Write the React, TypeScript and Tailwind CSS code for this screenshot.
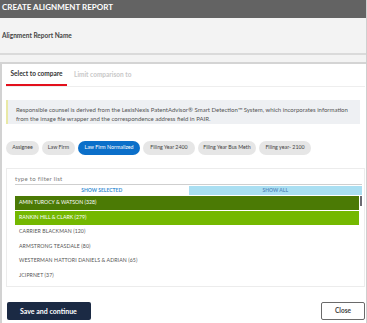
export default function App() {
  const chips = [
    { label: "Assignee", w: "w-[33px]" },
    { label: "Law Firm", w: "w-[33px]" },
    { label: "Law Firm Normalized", w: "w-[62px]", active: true },
    { label: "Filing Year 2400", w: "w-[52px]" },
    { label: "Filing Year Bus Meth", w: "w-[58px]" },
    { label: "Filing year- 2100", w: "w-[52px]" },
  ];
  const rows = [
    "CARRIER BLACKMAN (120)",
    "ARMSTRONG TEASDALE (80)",
    "WESTERMAN HATTORI DANIELS & ADRIAN (65)",
    "JCIPRNET (37)",
  ];
  return (
    <div className="w-[367px] h-[323px] bg-white border-r border-[#cfcfcf] flex flex-col overflow-hidden font-['Lato','Open_Sans',sans-serif] text-[#333]">
      <div className="h-[18px] shrink-0 bg-[#636363] text-white font-bold text-[8px] leading-[14px] pl-[2px]">
        CREATE ALIGNMENT REPORT
      </div>
      <div className="h-[37px] shrink-0 bg-[#f3f3f3] border-b-2 border-[#dadada] flex items-center pl-[2px] text-[6.5px] font-bold text-[#444]">
        Alignment Report Name
      </div>
      <div className="h-[9px] shrink-0 bg-[#f3f3f3] border-b-2 border-[#d4d4d4]" />
      <div className="flex-1 flex flex-col border-l-2 border-[#d2d2d2] pl-[4px] pr-[1px]">
        <div className="h-[23px] shrink-0 flex border-b border-[#eeeeee]">
          <div className="w-[61px] flex items-center justify-center text-[6.5px] font-bold text-[#333] border-b-[2px] border-[#e3101c]">
            Select to compare
          </div>
          <div className="ml-[7px] flex items-center text-[6.5px] font-bold text-[#c8c8c8]">
            Limit comparison to
          </div>
        </div>
        <div className="mt-[13px] h-[24px] mr-[5px] shrink-0 bg-[#eef0f3] border-l-2 border-[#e9e9a6] pl-[8px] pt-[6px] text-[6px] leading-[8.5px] text-[#555] whitespace-nowrap overflow-hidden">
          Responsible counsel is derived from the LexisNexis PatentAdvisor® Smart Detection™ System, which incorporates information
          <br />
          from the image file wrapper and the correspondence address field in PAIR.
        </div>
        <div className="mt-[17px] flex gap-[3px] shrink-0">
          {chips.map((c) => (
            <div
              key={c.label}
              className={`${c.w} h-[14px] rounded-full flex items-center justify-center text-[5.3px] whitespace-nowrap ${
                c.active ? "bg-[#0b6fc9] text-white" : "bg-[#e6e6e6] text-[#444]"
              }`}
            >
              {c.label}
            </div>
          ))}
        </div>
        <div className="mt-[13px] h-[119px] shrink-0 border border-[#ececec] pl-[8px] pr-[2px] pt-[5px] flex flex-col">
          <div className="h-[11px] border-b border-[#cfcfcf] text-[6px] text-[#777] tracking-[0.3px] leading-[9px]">
            type to filter list
          </div>
          <div className="mt-[1px] h-[9px] flex">
            <div className="flex-1 flex items-center justify-center text-[5px] font-bold text-[#3b8fd4]">
              SHOW SELECTED
            </div>
            <div className="flex-1 bg-[#aadff2] flex items-center justify-center text-[5px] font-bold text-[#5a8fc0]">
              SHOW ALL
            </div>
          </div>
          <div className="relative mt-[1px]">
            <div className="mr-[3px] h-[14px] bg-[#4b7a05] text-white text-[5.2px] flex items-center pl-[4px]">
              AMIN TUROCY &amp; WATSON (328)
            </div>
            <div className="absolute right-0 top-0 w-[2px] h-[10px] bg-[#6b6b73]" />
            <div className="mr-[3px] mt-[1px] h-[14px] bg-[#74b800] text-white text-[5.2px] flex items-center pl-[4px]">
              RANKIN HILL &amp; CLARK (279)
            </div>
            {rows.map((r) => (
              <div key={r} className="h-[14.5px] flex items-center pl-[4px] text-[5.2px] tracking-[0.1px] text-[#555]">
                {r}
              </div>
            ))}
          </div>
        </div>
        <div className="mt-[15px] flex justify-between items-start">
          <div className="ml-[1px] w-[84px] h-[18px] bg-[#1b2a44] rounded-[2px] flex items-center pl-[13px] text-white font-bold text-[7px]">
            Save and continue
          </div>
          <div className="w-[44px] h-[18px] border-[1.5px] border-[#6a6a6a] rounded-[2px] flex items-center justify-center text-[6.5px] font-bold text-[#444]">
            Close
          </div>
        </div>
      </div>
    </div>
  );
}
